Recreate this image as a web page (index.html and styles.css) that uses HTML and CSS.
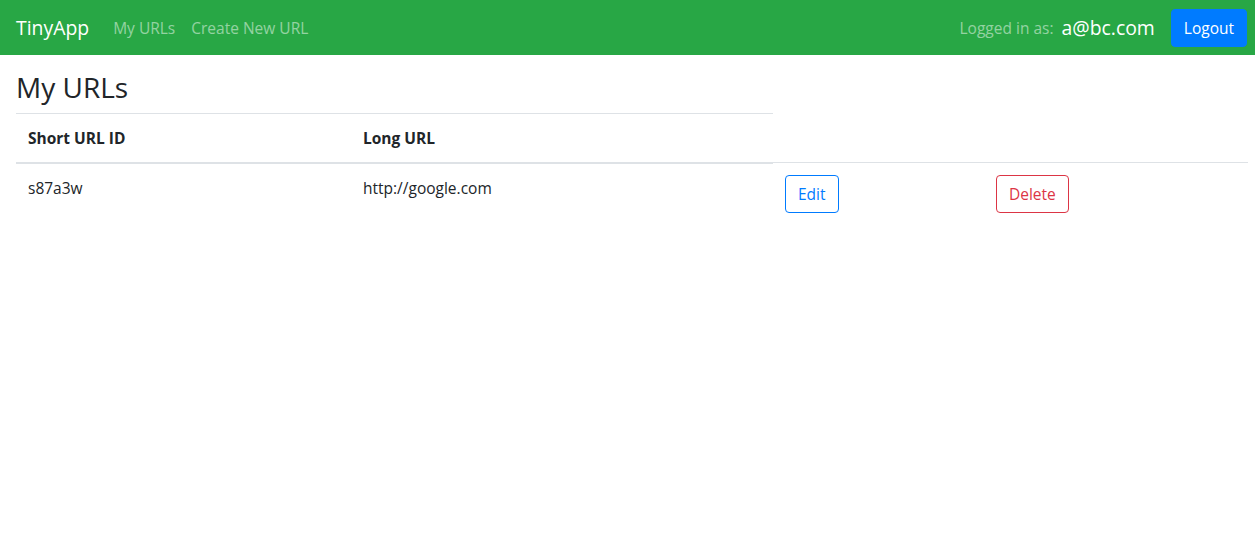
FILE: index.html
```html
<!DOCTYPE html>
<html>
<head>
<meta charset="utf-8">
<link rel="stylesheet" href="styles.css">
</head>
<body>
<nav class="navbar">
  <a class="brand" href="#">TinyApp</a>
  <div class="nav-links">
    <a class="nav-link" href="#">My URLs</a>
    <a class="nav-link" href="#">Create New URL</a>
  </div>
  <div class="nav-right">
    <span class="logged">Logged in as:</span>
    <span class="user">a@bc.com</span>
    <button class="btn btn-primary">Logout</button>
  </div>
</nav>
<main class="content">
  <h3 class="title">My URLs</h3>
  <table class="table">
    <thead>
      <tr><th class="c1">Short URL ID</th><th class="c2">Long URL</th></tr>
    </thead>
    <tbody>
      <tr>
        <td>s87a3w</td>
        <td>http://google.com</td>
        <td class="c3"><button class="btn btn-outline-primary">Edit</button></td>
        <td><button class="btn btn-outline-danger">Delete</button></td>
      </tr>
    </tbody>
  </table>
</main>
</body>
</html>
```
FILE: styles.css
```css
* { box-sizing: border-box; }
html, body { margin: 0; padding: 0; }
body {
  font-family: "Open Sans", "Noto Sans", sans-serif;
  font-size: 15.5px;
  line-height: 24px;
  color: #212529;
  background: #fff;
}
.navbar {
  display: flex;
  align-items: center;
  height: 55px;
  padding: 0 8px 0 16px;
  background: #28a745;
}
.brand {
  color: #fff;
  font-size: 19.4px;
  line-height: 30px;
  text-decoration: none;
  margin-right: 16px;
}
.nav-links { display: flex; }
.nav-link {
  color: rgba(255,255,255,0.5);
  text-decoration: none;
  padding: 0 8px;
}
.nav-right {
  margin-left: auto;
  display: flex;
  align-items: center;
}
.logged { color: rgba(255,255,255,0.5); margin-right: 8px; }
.user { color: #fff; font-size: 19.4px; line-height: 30px; margin-right: 16px; }
.btn {
  font-family: inherit;
  font-size: 15.5px;
  line-height: 24px;
  padding: 6px 12px;
  border-radius: 4px;
  border: 1px solid transparent;
  background: transparent;
  cursor: pointer;
}
.btn-primary { background: #007bff; border-color: #007bff; color: #fff; }
.btn-outline-primary { color: #007bff; border-color: #007bff; }
.btn-outline-danger { color: #dc3545; border-color: #dc3545; }
.content { padding: 0 7px 0 16px; }
.title {
  font-size: 28px;
  font-weight: 500;
  line-height: 1.2;
  margin: 16px 0 8px;
}
.table {
  width: 100%;
  border-collapse: collapse;
}
.table th, .table td {
  padding: 12px;
  text-align: left;
  vertical-align: top;
  border-top: 1px solid #dee2e6;
}
.table thead th { border-bottom: 2px solid #dee2e6; vertical-align: bottom; font-weight: 700; }
.c1 { width: 335px; }
.c2 { width: 422px; }
.c3 { width: 211px; }
```
